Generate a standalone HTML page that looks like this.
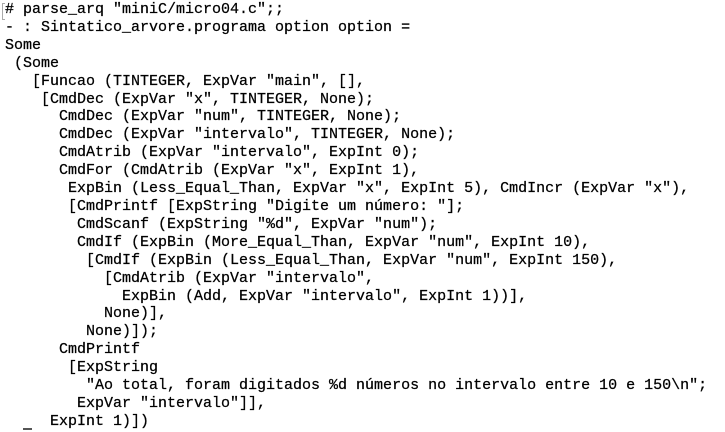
<!DOCTYPE html>
<html><head><meta charset="utf-8"><style>
html,body{margin:0;padding:0;background:#fff;width:725px;height:432px;overflow:hidden}
pre{margin:0;padding:1px 0 0 5px;font-family:"Liberation Mono",monospace;font-size:15px;line-height:17.9px;color:#000;-webkit-text-stroke:0.25px #000}
.c{position:absolute;left:2px;top:3px;width:2px;height:15px;border:1px solid #aaa;border-right:none}
.u{position:absolute;left:23px;top:428px;width:9px;height:2px;background:#555}
</style></head><body>
<div class="c"></div><div class="u"></div>
<pre># parse_arq "miniC/micro04.c";;
- : Sintatico_arvore.programa option option =
Some
 (Some
   [Funcao (TINTEGER, ExpVar "main", [],
    [CmdDec (ExpVar "x", TINTEGER, None);
      CmdDec (ExpVar "num", TINTEGER, None);
      CmdDec (ExpVar "intervalo", TINTEGER, None);
      CmdAtrib (ExpVar "intervalo", ExpInt 0);
      CmdFor (CmdAtrib (ExpVar "x", ExpInt 1),
       ExpBin (Less_Equal_Than, ExpVar "x", ExpInt 5), CmdIncr (ExpVar "x"),
       [CmdPrintf [ExpString "Digite um número: "];
        CmdScanf (ExpString "%d", ExpVar "num");
        CmdIf (ExpBin (More_Equal_Than, ExpVar "num", ExpInt 10),
         [CmdIf (ExpBin (Less_Equal_Than, ExpVar "num", ExpInt 150),
           [CmdAtrib (ExpVar "intervalo",
             ExpBin (Add, ExpVar "intervalo", ExpInt 1))],
           None)],
         None)]);
      CmdPrintf
       [ExpString
         "Ao total, foram digitados %d números no intervalo entre 10 e 150\n";
        ExpVar "intervalo"]],
     ExpInt 1)])</pre>
</body></html>
